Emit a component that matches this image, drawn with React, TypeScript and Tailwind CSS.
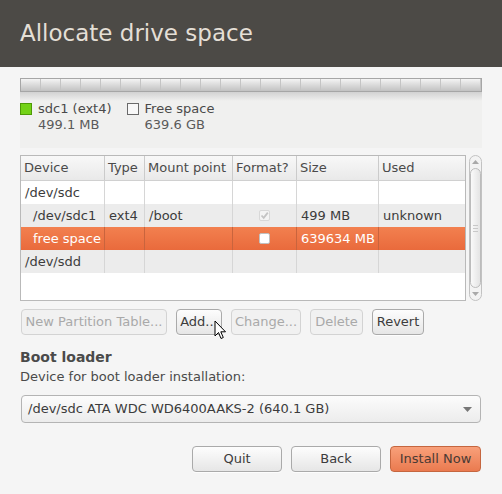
import React from "react";

const FONT = { fontFamily: '"DejaVu Sans", sans-serif' };

type Row = {
  device: string;
  type?: string;
  mount?: string;
  format?: "checked" | "empty";
  size?: string;
  used?: string;
  indent?: boolean;
  tone: "white" | "grey" | "sel";
};

const ROWS: Row[] = [
  { device: "/dev/sdc", tone: "white" },
  { device: "/dev/sdc1", type: "ext4", mount: "/boot", format: "checked", size: "499 MB", used: "unknown", indent: true, tone: "grey" },
  { device: "free space", format: "empty", size: "639634 MB", indent: true, tone: "sel" },
  { device: "/dev/sdd", tone: "grey" },
];

// column widths, table is 446px wide inside its border
const COLS = ["w-[84px]", "w-[40px]", "w-[88px]", "w-[64px]", "w-[82px]", "flex-1"];

function Btn({ label, disabled, className = "" }: { label: string; disabled?: boolean; className?: string }) {
  return (
    <div
      className={`h-[26px] flex items-center justify-center rounded-[4px] border text-[13px] ${
        disabled
          ? "border-[#d3d3d3] bg-[#f1f1f1] text-[#a9a9a9]"
          : "border-[#aaaaaa] bg-gradient-to-b from-[#fdfdfd] to-[#e6e6e6] text-[#3c3c3c] shadow-[0_1px_0_rgba(255,255,255,0.8)]"
      } ${className}`}
    >
      {label}
    </div>
  );
}

export default function App() {
  return (
    <div className="w-[502px] h-[494px] bg-[#f5f5f5] text-[#3c3c3c] overflow-hidden relative" style={FONT}>
      {/* title bar */}
      <div className="h-[67px] bg-[#4c4a46] flex items-center px-[20px]">
        <span className="text-[23px] text-[#e4dfd6] leading-none -mt-[1px]">Allocate drive space</span>
      </div>

      <div className="px-[20px] pt-[11px]">
        {/* partition bar */}
        <div className="h-[70px] w-[462px] bg-[#f0f0ef] flex flex-col">
          <div className="h-[14px] border border-[#a6a6a6] bg-gradient-to-b from-[#f4f4f4] via-[#dadada] to-[#c2c2c2] flex">
            {Array.from({ length: 23 }).map((_, i) => (
              <div key={i} className="w-[20px] h-full border-r border-[#c4c4c4] shrink-0" />
            ))}
          </div>
          <div className="h-[9px] bg-gradient-to-b from-[#d2d2d2] to-[#f0f0ef]" />
          <div className="flex gap-[15px] text-[13px] leading-[16px] text-[#4a4a4a]">
            <div className="flex gap-[6px]">
              <div className="w-[12px] h-[12px] mt-[2px] bg-[#73d216] border border-[#4e9a06]" />
              <div>
                <div>sdc1 (ext4)</div>
                <div className="text-[#5a5a5a]">499.1 MB</div>
              </div>
            </div>
            <div className="flex gap-[6px]">
              <div className="w-[12px] h-[12px] mt-[2px] bg-[#f8f8f8] border border-[#6a6a6a]" />
              <div>
                <div>Free space</div>
                <div className="text-[#5a5a5a]">639.6 GB</div>
              </div>
            </div>
          </div>
        </div>

        {/* partition table + scrollbar */}
        <div className="flex mt-[7px] gap-[3px]">
          <div className="w-[447px] h-[146px] border border-[#b9b9b9] bg-white text-[13px] flex flex-col">
            <div className="h-[25px] flex bg-gradient-to-b from-[#f8f8f8] to-[#e9e9e9] border-b border-[#d0d0d0] text-[#4a4a4a]">
              {["Device", "Type", "Mount point", "Format?", "Size", "Used"].map((h, i) => (
                <div key={h} className={`${COLS[i]} flex items-center pl-[3px] ${i < 5 ? "border-r border-[#cbcbcb]" : ""}`}>
                  {h}
                </div>
              ))}
            </div>
            {ROWS.map((r) => {
              const bg =
                r.tone === "sel"
                  ? "bg-gradient-to-b from-[#f2804f] to-[#e96a3c] text-white"
                  : r.tone === "grey"
                  ? "bg-[#ececec]"
                  : "bg-white";
              const line = r.tone === "sel" ? "border-[#c9643d]" : "border-[#d6d6d6]";
              return (
                <div key={r.device} className={`h-[23px] flex ${bg}`}>
                  <div className={`${COLS[0]} border-r ${line} flex items-center ${r.indent ? "pl-[12px]" : "pl-[4px]"}`}>{r.device}</div>
                  <div className={`${COLS[1]} border-r ${line} flex items-center pl-[4px]`}>{r.type}</div>
                  <div className={`${COLS[2]} border-r ${line} flex items-center pl-[4px]`}>{r.mount}</div>
                  <div className={`${COLS[3]} border-r ${line} flex items-center justify-center`}>
                    {r.format === "checked" && (
                      <div className="w-[11px] h-[11px] rounded-[2px] border border-[#d8d8d8] bg-[#f4f4f4] flex items-center justify-center">
                        <svg width="9" height="9" viewBox="0 0 9 9">
                          <path d="M1.5 4.5 L3.7 6.8 L7.8 1.6" fill="none" stroke="#c4c4c4" strokeWidth="1.8" />
                        </svg>
                      </div>
                    )}
                    {r.format === "empty" && <div className="w-[11px] h-[11px] rounded-[2px] border border-[#c0c0c0] bg-white" />}
                  </div>
                  <div className={`${COLS[4]} border-r ${line} flex items-center pl-[4px]`}>{r.size}</div>
                  <div className={`${COLS[5]} flex items-center pl-[4px]`}>{r.used}</div>
                </div>
              );
            })}
            <div className="flex-1" />
          </div>

          {/* scrollbar */}
          <div className="w-[13px] h-[146px] rounded-[7px] border border-[#c2c2c2] bg-[#f3f3f3] flex flex-col items-center">
            <div className="h-[12px] flex items-center justify-center">
              <svg width="7" height="4" viewBox="0 0 7 4">
                <path d="M0 4 L3.5 0 L7 4 Z" fill="#a9a9a9" />
              </svg>
            </div>
            <div className="flex-1 w-[11px] rounded-[6px] border border-[#bcbcbc] bg-gradient-to-r from-[#fafafa] to-[#e4e4e4] flex flex-col items-center justify-center gap-[2px]">
              <div className="w-[5px] h-px bg-[#c8c8c8]" />
              <div className="w-[5px] h-px bg-[#c8c8c8]" />
              <div className="w-[5px] h-px bg-[#c8c8c8]" />
            </div>
            <div className="h-[12px] flex items-center justify-center">
              <svg width="7" height="4" viewBox="0 0 7 4">
                <path d="M0 0 L7 0 L3.5 4 Z" fill="#a9a9a9" />
              </svg>
            </div>
          </div>
        </div>

        {/* partition buttons */}
        <div className="flex gap-[9px] mt-[8px] pl-[1px]">
          <Btn label="New Partition Table..." disabled className="w-[146px]" />
          <Btn label="Add..." className="w-[46px]" />
          <Btn label="Change..." disabled className="w-[70px]" />
          <Btn label="Delete" disabled className="w-[53px]" />
          <Btn label="Revert" className="w-[52px]" />
        </div>

        {/* boot loader */}
        <div className="mt-[12px] text-[14px] font-bold text-[#4a4a4a] leading-[20px]">Boot loader</div>
        <div className="mt-[1px] text-[13px] leading-[17px] text-[#4a4a4a]">Device for boot loader installation:</div>
        <div className="mt-[10px] ml-[1px] w-[460px] h-[28px] rounded-[4px] border border-[#b4b4b4] bg-gradient-to-b from-[#fcfcfc] to-[#ececec] flex items-center justify-between pl-[6px] pr-[8px] text-[13px]">
          <span>/dev/sdc ATA WDC WD6400AAKS-2 (640.1 GB)</span>
          <svg width="9" height="5" viewBox="0 0 9 5">
            <path d="M0 0 L9 0 L4.5 5 Z" fill="#777777" />
          </svg>
        </div>

        {/* navigation */}
        <div className="flex justify-end gap-[9px] mt-[23px] pr-[1px]">
          <Btn label="Quit" className="w-[90px]" />
          <Btn label="Back" className="w-[90px]" />
          <div className="w-[91px] h-[26px] flex items-center justify-center rounded-[4px] border border-[#c5663f] bg-gradient-to-b from-[#f8a07a] to-[#ea7a4f] text-[13px] text-[#4a3a34]">
            Install Now
          </div>
        </div>
      </div>

      {/* mouse pointer */}
      <svg className="absolute left-[214px] top-[320px]" width="13" height="20" viewBox="0 0 13 20">
        <path d="M1 1 L1 16 L4.5 12.5 L7 18.5 L9.3 17.5 L6.8 11.8 L11.5 11.8 Z" fill="#ffffff" stroke="#000000" strokeWidth="1" strokeLinejoin="round" />
      </svg>
    </div>
  );
}
